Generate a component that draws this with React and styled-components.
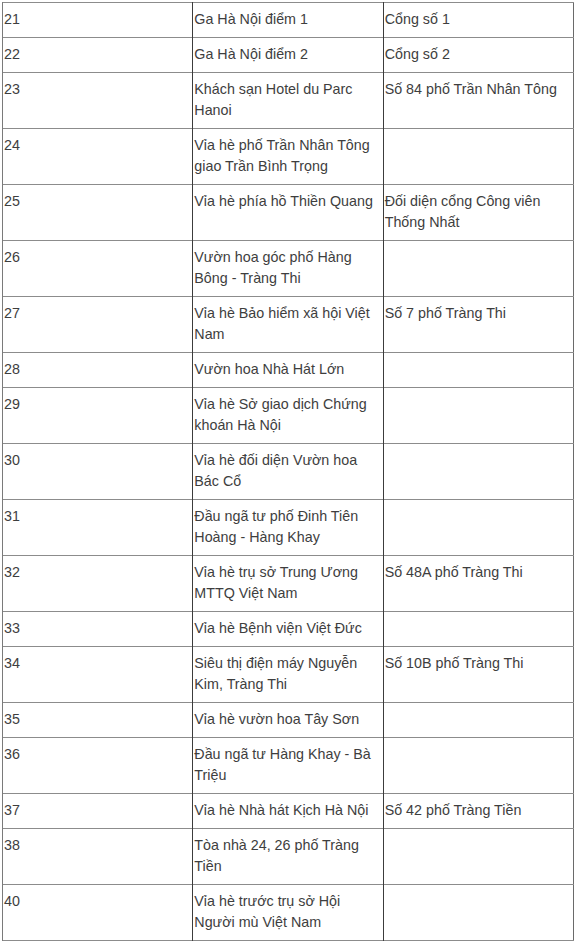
import React from 'react';
import styled, { createGlobalStyle } from 'styled-components';

const GlobalStyle = createGlobalStyle`
  body {
    margin: 0;
    background: #fff;
    font-family: "Liberation Sans", Arial, sans-serif;
  }
`;

const Wrapper = styled.div`
  padding: 2px 0 0 2px;
`;

const Table = styled.table`
  width: 572px;
  border-collapse: collapse;
  table-layout: fixed;
  font-size: 14.3px;
  line-height: 21px;
  color: #3e3e3e;
  border-left: 1px solid #7a7a7a;
  border-right: 1px solid #6a6a6a;
`;

const Row = styled.tr`
  border-top: 1px solid #8c8c8c;
  border-bottom: 1px solid #8c8c8c;
`;

const Cell = styled.td`
  vertical-align: top;
  padding: 6px 5px 7px 1px;
  border-left: ${({ first }) => (first ? '1px solid #7a7a7a' : '1px solid #3c3c3c')};
`;

const rows = [
  ['21', 'Ga Hà Nội điểm 1', 'Cổng số 1'],
  ['22', 'Ga Hà Nội điểm 2', 'Cổng số 2'],
  ['23', 'Khách sạn Hotel du Parc Hanoi', 'Số 84 phố Trần Nhân Tông'],
  ['24', 'Vỉa hè phố Trần Nhân Tông giao Trần Bình Trọng', ''],
  ['25', 'Vỉa hè phía hồ Thiền Quang', 'Đối diện cổng Công viên Thống Nhất'],
  ['26', 'Vườn hoa góc phố Hàng Bông - Tràng Thi', ''],
  ['27', 'Vỉa hè Bảo hiểm xã hội Việt Nam', 'Số 7 phố Tràng Thi'],
  ['28', 'Vườn hoa Nhà Hát Lớn', ''],
  ['29', 'Vỉa hè Sở giao dịch Chứng khoán Hà Nội', ''],
  ['30', 'Vỉa hè đối diện Vườn hoa Bác Cổ', ''],
  ['31', 'Đầu ngã tư phố Đinh Tiên Hoàng - Hàng Khay', ''],
  ['32', 'Vỉa hè trụ sở Trung Ương MTTQ Việt Nam', 'Số 48A phố Tràng Thi'],
  ['33', 'Vỉa hè Bệnh viện Việt Đức', ''],
  ['34', 'Siêu thị điện máy Nguyễn Kim, Tràng Thi', 'Số 10B phố Tràng Thi'],
  ['35', 'Vỉa hè vườn hoa Tây Sơn', ''],
  ['36', 'Đầu ngã tư Hàng Khay - Bà Triệu', ''],
  ['37', 'Vỉa hè Nhà hát Kịch Hà Nội', 'Số 42 phố Tràng Tiền'],
  ['38', 'Tòa nhà 24, 26 phố Tràng Tiền', ''],
  ['40', 'Vỉa hè trước trụ sở Hội Người mù Việt Nam', ''],
];

const App = () => {
  return (
    <Wrapper>
      <GlobalStyle />
      <Table>
        <tbody>
          {rows.map(([num, place, address]) => (
            <Row key={num}>
              <Cell first>{num}</Cell>
              <Cell>{place}</Cell>
              <Cell>{address}</Cell>
            </Row>
          ))}
        </tbody>
      </Table>
    </Wrapper>
  );
};

export default App;
